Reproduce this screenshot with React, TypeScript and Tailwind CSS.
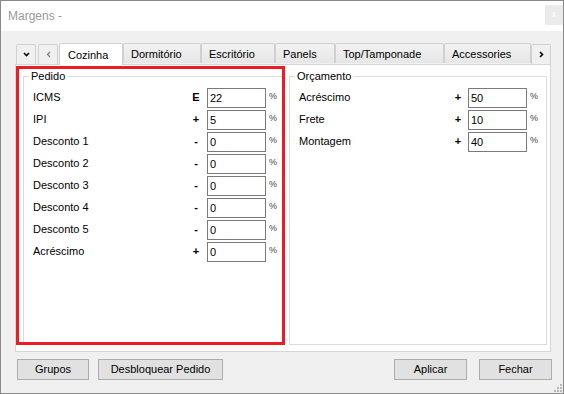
import React from "react";

type Row = { label: string; sign: string; value: string };

const pedido: Row[] = [
  { label: "ICMS", sign: "E", value: "22" },
  { label: "IPI", sign: "+", value: "5" },
  { label: "Desconto 1", sign: "-", value: "0" },
  { label: "Desconto 2", sign: "-", value: "0" },
  { label: "Desconto 3", sign: "-", value: "0" },
  { label: "Desconto 4", sign: "-", value: "0" },
  { label: "Desconto 5", sign: "-", value: "0" },
  { label: "Acréscimo", sign: "+", value: "0" },
];

const orcamento: Row[] = [
  { label: "Acréscimo", sign: "+", value: "50" },
  { label: "Frete", sign: "+", value: "10" },
  { label: "Montagem", sign: "+", value: "40" },
];

const tabs = [
  { name: "Cozinha", w: "w-[64px]", active: true },
  { name: "Dormitório", w: "w-[78px]" },
  { name: "Escritório", w: "w-[74px]" },
  { name: "Panels", w: "w-[60px]" },
  { name: "Top/Tamponade", w: "w-[109px]" },
  { name: "Accessories", w: "w-[87px]" },
];

const FieldRow = ({ row, labelW, gap }: { row: Row; labelW: string; gap: string }) => (
  <div className="flex h-[20px] items-center">
    <span className={`${labelW} pb-[2px] leading-[13px]`}>{row.label}</span>
    <span className="w-[14px] pb-[2px] text-center font-bold leading-[13px]">{row.sign}</span>
    <div className={`${gap} flex h-[20px] w-[59px] items-center border border-[#7a7a7a] bg-white pl-[2px] leading-[13px]`}>
      {row.value}
    </div>
    <span className="ml-[3px] self-start pt-[3px] text-[9px] leading-[10px] text-[#444]">%</span>
  </div>
);

const Btn = ({ children, w }: { children: React.ReactNode; w: string }) => (
  <button className={`${w} h-[21px] border border-[#adadad] bg-[#e1e1e1] text-center leading-[13px] text-black`}>
    {children}
  </button>
);

const SmallTab = ({ children, className }: { children: React.ReactNode; className: string }) => (
  <div
    className={`${className} flex h-[20px] w-[20px] items-center justify-center rounded-t-[2px] border border-b-0 border-[#d0d0d0] bg-[#f0f0f0]`}
  >
    {children}
  </div>
);

export default function App() {
  return (
    <div
      className="relative flex h-[394px] w-[564px] flex-col border border-[#8a8a8a] bg-[#f0f0f0] text-[11px] text-black"
      style={{ fontFamily: '"Liberation Sans", Arial, sans-serif' }}
    >
      {/* Title bar */}
      <div className="flex h-[30px] items-center justify-between bg-white">
        <span className="pl-[7px] text-[12px] text-[#9a9a9a]">Margens -</span>
        <div className="mb-[3px] flex h-[20px] w-[18px] items-center justify-center bg-[#ebebeb] text-[9px] text-white">
          x
        </div>
      </div>

      <div className="flex flex-col pl-[14px] pt-[12px]">
        {/* Tab strip */}
        <div className="relative z-10 flex h-[21px] items-end">
          <SmallTab className="ml-[1px]">
            <svg width="7" height="5" viewBox="0 0 7 5">
              <polyline points="1,1 3.5,3.5 6,1" fill="none" stroke="#000" strokeWidth="1.6" />
            </svg>
          </SmallTab>
          <SmallTab className="ml-[2px]">
            <svg width="5" height="7" viewBox="0 0 5 7">
              <polyline points="4,1 1.5,3.5 4,6" fill="none" stroke="#777" strokeWidth="1.1" />
            </svg>
          </SmallTab>
          <div className="ml-[1px] flex">
            {tabs.map((t) =>
              t.active ? (
                <div
                  key={t.name}
                  className={`${t.w} -mb-[1px] h-[22px] rounded-t-[2px] border border-b-0 border-[#d0d0d0] bg-white pl-[8px] pt-[5px] leading-[13px]`}
                >
                  {t.name}
                </div>
              ) : (
                <div
                  key={t.name}
                  className={`${t.w} h-[20px] rounded-t-[2px] border border-b-0 border-[#d0d0d0] bg-gradient-to-b from-[#f2f2f2] to-[#e6e6e6] pl-[7px] pt-[4px] leading-[13px]`}
                >
                  {t.name}
                </div>
              )
            )}
          </div>
          <SmallTab className="ml-0">
            <svg width="5" height="7" viewBox="0 0 5 7">
              <polyline points="1,1 3.5,3.5 1,6" fill="none" stroke="#000" strokeWidth="1.6" />
            </svg>
          </SmallTab>
        </div>

        {/* Tab panel */}
        <div className="flex h-[288px] w-[536px] border border-[#d6d6d6] bg-white">
          <div className="mt-[1px] flex h-[279px] w-[269px] border-[3px] border-[#ed1c24]">
            <fieldset className="ml-[4px] flex-1 border-l border-t border-[#dcdcdc] pl-[9px]">
              <legend className="-ml-[4px] px-[2px] leading-[14px]">Pedido</legend>
              <div className="flex flex-col gap-[2px] pt-[5px]">
                {pedido.map((r) => (
                  <FieldRow key={r.label + r.sign} row={r} labelW="w-[156px]" gap="ml-[4px]" />
                ))}
              </div>
            </fieldset>
          </div>
          <fieldset className="ml-[4px] mt-[4px] h-[276px] w-[258px] border border-[#dcdcdc] pl-[9px]">
            <legend className="-ml-[4px] px-[2px] leading-[14px]">Orçamento</legend>
            <div className="flex flex-col gap-[2px] pt-[5px]">
              {orcamento.map((r) => (
                <FieldRow key={r.label} row={r} labelW="w-[152px]" gap="ml-[3px]" />
              ))}
            </div>
          </fieldset>
        </div>

        {/* Buttons */}
        <div className="mt-[7px] flex w-[537px]">
          <div className="ml-[2px] flex gap-[9px]">
            <Btn w="w-[72px]">Grupos</Btn>
            <Btn w="w-[125px]">Desbloquear Pedido</Btn>
          </div>
          <div className="ml-auto flex gap-[12px]">
            <Btn w="w-[73px]">Aplicar</Btn>
            <Btn w="w-[73px]">Fechar</Btn>
          </div>
        </div>
      </div>

      {/* Size grip */}
      <svg className="absolute bottom-[1px] right-[1px]" width="9" height="9" viewBox="0 0 9 9">
        <g fill="#b8b8b8">
          <rect x="7" y="1" width="2" height="2" />
          <rect x="4" y="4" width="2" height="2" />
          <rect x="7" y="4" width="2" height="2" />
          <rect x="1" y="7" width="2" height="2" />
          <rect x="4" y="7" width="2" height="2" />
          <rect x="7" y="7" width="2" height="2" />
        </g>
      </svg>
    </div>
  );
}
